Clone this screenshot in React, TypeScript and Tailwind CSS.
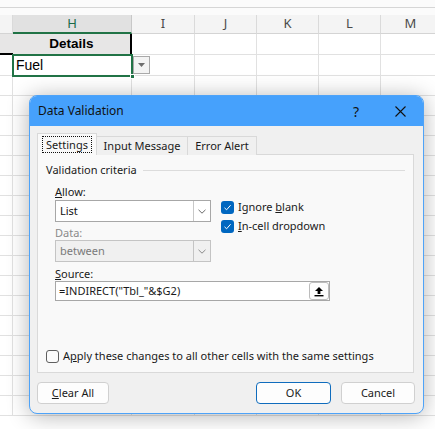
import React from "react";

const ui = { fontFamily: '"Noto Sans", "Liberation Sans", sans-serif' };
const cell = { fontFamily: '"Liberation Sans", Arial, sans-serif' };

const cols = [
  { w: 13, l: "" },
  { w: 119, l: "H" },
  { w: 63, l: "I" },
  { w: 62, l: "J" },
  { w: 62, l: "K" },
  { w: 62, l: "L" },
  { w: 60, l: "M" },
];

const extraRows = Array.from({ length: 17 });

function Check({ on }: { on: boolean }) {
  if (!on)
    return <span className="h-[13px] w-[13px] shrink-0 rounded-[3px] border border-[#5f5f5f] bg-[#fbfbfb]" />;
  return (
    <span className="flex h-[13px] w-[13px] shrink-0 items-center justify-center rounded-[3px] bg-[#0067c0]">
      <svg width="9" height="9" viewBox="0 0 9 9" fill="none">
        <path d="M1.5 4.8 L3.6 6.8 L7.6 2.2" stroke="#ffffff" strokeWidth="1" />
      </svg>
    </span>
  );
}

function Chevron({ color }: { color: string }) {
  return (
    <svg width="8" height="5" viewBox="0 0 8 5" fill="none">
      <path d="M0.5 0.8 L4 4.2 L7.5 0.8" stroke={color} strokeWidth="1" />
    </svg>
  );
}

function Select({ value, disabled }: { value: string; disabled?: boolean }) {
  return (
    <div
      className={`flex h-[22px] w-[156px] items-stretch border ${
        disabled ? "border-[#c4c4c4] bg-[#f0f0f0] text-[#7a7a7a]" : "border-[#a7a7a7] bg-white text-[#111]"
      }`}
    >
      <span className="flex flex-1 items-center pl-[4px]">{value}</span>
      <span className={`flex w-[17px] items-center justify-center border-l ${disabled ? "border-[#c4c4c4]" : "border-[#c8c8c8]"}`}>
        <Chevron color={disabled ? "#8a8a8a" : "#6a6a6a"} />
      </span>
    </div>
  );
}

function Btn({ children, primary }: { children: React.ReactNode; primary?: boolean }) {
  return (
    <div
      className={`flex h-[22px] items-center justify-center rounded-[4px] border bg-[#fdfdfd] ${
        primary ? "border-[#0f6cbd]" : "border-[#d0d0d0]"
      }`}
    >
      {children}
    </div>
  );
}

export default function App() {
  return (
    <div className="relative h-[429px] w-[435px] overflow-hidden bg-white">
      {/* sheet */}
      <div className="flex flex-col">
        <div className="h-[7px] bg-[#fbfbfb]" />
        <div className="h-px bg-[#d6d6d6]" />
        <div className="h-[7px] bg-[#fbfbfb]" />
        <div className="flex h-[19px]">
          {cols.map((c, i) => (
            <div
              key={i}
              style={{ width: c.w }}
              className={`flex shrink-0 items-center justify-center border-r text-[13px] ${
                i === 1
                  ? "border-b-2 border-b-[#217346] border-r-[#c8c8c8] bg-[#e1e1e1] text-[#1a6b48]"
                  : "border-b border-b-[#d4d4d4] border-r-[#dadada] bg-[#f4f4f4] text-[#4a4a4a]"
              }`}
            >
              <span style={ui}>{c.l}</span>
            </div>
          ))}
        </div>
        <div className="flex h-[21px]" style={cell}>
          <div className="w-[13px] shrink-0 border-b-2 border-b-black bg-[#e7e6e6]" />
          <div className="flex w-[119px] shrink-0 items-center justify-center border-r-2 border-r-black bg-[#e7e6e6] text-[13.5px] font-bold text-black">
            Details
          </div>
          {cols.slice(2).map((c, i) => (
            <div key={i} style={{ width: c.w }} className="shrink-0 border-r border-b border-[#e1e1e1]" />
          ))}
        </div>
        <div className="flex h-[21px]" style={cell}>
          <div className="w-[13px] shrink-0 border-r border-b border-[#e1e1e1]" />
          <div className="flex w-[119px] shrink-0 items-center border-r border-b border-[#e1e1e1] pl-[3px] text-[14px] text-black">
            Fuel
          </div>
          {cols.slice(2).map((c, i) => (
            <div key={i} style={{ width: c.w }} className="shrink-0 border-r border-b border-[#e1e1e1]" />
          ))}
        </div>
        {extraRows.map((_, r) => (
          <div key={r} className="flex h-[20px]">
            {cols.map((c, i) => (
              <div key={i} style={{ width: c.w }} className="shrink-0 border-r border-b border-[#e1e1e1]" />
            ))}
          </div>
        ))}
      </div>

      {/* selection on H2 */}
      <div className="absolute left-[12px] top-[54px] h-[23px] w-[121px] border-2 border-[#217346]" />
      <div className="absolute left-[130px] top-[74px] h-[5px] w-[5px] border border-white bg-[#217346]" />
      {/* in-cell dropdown button */}
      <div className="absolute left-[133px] top-[56px] flex h-[18px] w-[17px] items-center justify-center border border-[#a9a9a9] bg-[#f3f3f3]">
        <svg width="7" height="4" viewBox="0 0 7 4">
          <path d="M0 0 H7 L3.5 4 Z" fill="#6d6d6d" />
        </svg>
      </div>

      {/* dialog */}
      <div
        className="absolute left-[29px] top-[95px] flex h-[319px] w-[395px] flex-col overflow-hidden rounded-[8px] border border-[#4ea3f8] bg-[#f0f0f0] text-[11px] text-[#1a1a1a] shadow-[0_2px_22px_rgba(0,0,0,0.3)]"
        style={ui}
      >
        <div className="flex h-[30px] shrink-0 items-center bg-[#46a1fc] pl-[8px] pr-[17px]">
          <span className="flex-1 text-[12px] text-[#111]">Data Validation</span>
          <span className="mr-[36px] text-[14px] text-[#111]">?</span>
          <svg width="11" height="11" viewBox="0 0 11 11">
            <path d="M0.5 0.5 L10.5 10.5 M10.5 0.5 L0.5 10.5" stroke="#111" strokeWidth="1.1" />
          </svg>
        </div>

        <div className="flex flex-1 flex-col pl-[7px] pt-[7px]">
          {/* tabs */}
          <div className="relative z-10 flex h-[22px] items-end">
            <div className="flex h-[22px] w-[60px] items-center justify-center border border-b-0 border-[#d9d9d9] bg-[#f9f9f9]">
              <span className="border border-dotted border-[#111] px-[3px] leading-[15px]">Settings</span>
            </div>
            <div className="flex h-[19px] w-[91px] items-center justify-center border-t border-r border-[#d9d9d9] bg-[#f0f0f0]">
              Input Message
            </div>
            <div className="flex h-[19px] w-[69px] items-center justify-center border-t border-r border-[#d9d9d9] bg-[#f0f0f0]">
              Error Alert
            </div>
          </div>

          {/* panel */}
          <div className="-mt-px flex h-[219px] w-[377px] flex-col border border-[#d9d9d9] bg-[#f9f9f9] pl-[8px] pr-[8px]">
            <div className="mt-[7px] flex h-[16px] items-center gap-[6px]">
              <span>Validation criteria</span>
              <span className="h-px flex-1 bg-[#dcdcdc]" />
            </div>

            <div className="mt-[4px] flex pl-[9px]">
              <div className="flex w-[166px] flex-col">
                <span className="h-[16px] leading-[19px]">
                  <u>A</u>llow:
                </span>
                <div className="mt-[2px]">
                  <Select value="List" />
                </div>
                <span className="mt-[1px] h-[16px] leading-[19px] text-[#8a8a8a]">Data:</span>
                <div className="mt-[1px]">
                  <Select value="between" disabled />
                </div>
              </div>
              <div className="mt-[19px] flex flex-col gap-[6px]">
                <div className="flex h-[13px] items-center gap-[4px]">
                  <Check on />
                  <span>
                    Ignore <u>b</u>lank
                  </span>
                </div>
                <div className="flex h-[13px] items-center gap-[4px]">
                  <Check on />
                  <span>
                    <u>I</u>n-cell dropdown
                  </span>
                </div>
              </div>
            </div>

            <div className="mt-[2px] flex flex-col pl-[9px]">
              <span className="h-[16px] leading-[19px]">
                <u>S</u>ource:
              </span>
              <div className="mt-[1px] flex h-[20px] w-[275px] items-center border border-[#a7a7a7] bg-white pl-[3px]">
                <span className="flex-1">=INDIRECT("Tbl_"&amp;$G2)</span>
                <span className="flex h-[18px] w-[20px] items-center justify-center rounded-[3px] border border-[#bcbcbc] bg-[#fdfdfd]">
                  <svg width="10" height="11" viewBox="0 0 10 11">
                    <path d="M5 1 L9 5 H6.4 V8 H3.6 V5 H1 Z" fill="#000" />
                    <rect x="0.5" y="9" width="9" height="1.4" fill="#000" />
                  </svg>
                </span>
              </div>
            </div>

            <div className="mt-auto mb-[9px] flex h-[13px] items-center gap-[4px]">
              <Check on={false} />
              <span>
                A<u>p</u>ply these changes to all other cells with the same settings
              </span>
            </div>
          </div>

          {/* buttons */}
          <div className="mt-[9px] flex items-center pr-[8px]">
            <div className="w-[72px]">
              <Btn>
                <span>
                  <u>C</u>lear All
                </span>
              </Btn>
            </div>
            <div className="flex-1" />
            <div className="w-[75px]">
              <Btn primary>OK</Btn>
            </div>
            <div className="ml-[10px] w-[74px]">
              <Btn>Cancel</Btn>
            </div>
          </div>
        </div>
      </div>
    </div>
  );
}
